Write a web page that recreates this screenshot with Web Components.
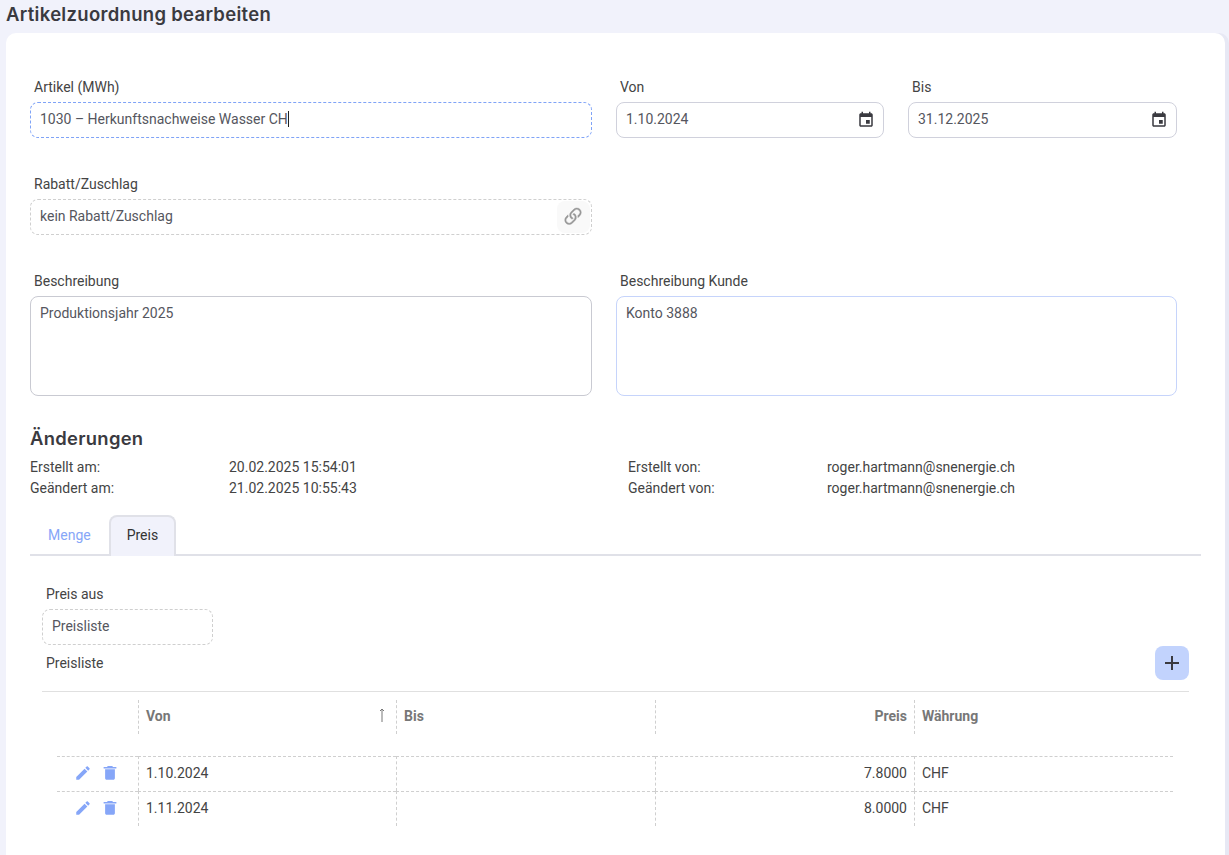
<!DOCTYPE html>
<html lang="de">
<head>
<meta charset="utf-8">
<title>Artikelzuordnung bearbeiten</title>
<style>
    html, body {
        margin: 0;
        height: 100%;
        overflow: hidden;
    }
    body {
        background: #f1f2fb;
        font-family: Roboto, "Liberation Sans", sans-serif;
        font-size: 14px;
        color: #444;
    }
</style>
</head>
<body>
<edit-page>
    <span slot="title">Artikelzuordnung bearbeiten</span>
    <form-row>
        <form-field label="Artikel (MWh)" variant="focus" style="width:562px"><span>1030 – Herkunftsnachweise Wasser CH</span><i-caret></i-caret></form-field>
        <form-field label="Von" variant="solid" style="width:268px">1.10.2024<form-icon slot="end" name="event" style="margin-right:-1px"></form-icon></form-field>
        <form-field label="Bis" variant="solid" style="width:269px">31.12.2025<form-icon slot="end" name="event" style="margin-right:-1px"></form-icon></form-field>
    </form-row>
    <form-row>
        <form-field label="Rabatt/Zuschlag" variant="dashed" style="width:562px">kein Rabatt/Zuschlag<link-button slot="end"></link-button></form-field>
    </form-row>
    <form-row>
        <form-field label="Beschreibung" variant="area" style="width:562px">Produktionsjahr 2025</form-field>
        <form-field label="Beschreibung Kunde" variant="area-blue" style="width:561px">Konto 3888</form-field>
    </form-row>
    <change-info></change-info>
    <tab-bar></tab-bar>
    <price-panel></price-panel>
</edit-page>

<script>
const ICONS = {
    event: 'M17 12h-5v5h5v-5zM16 1v2H8V1H6v2H5c-1.11 0-1.99.9-1.99 2L3 19c0 1.1.89 2 2 2h14c1.1 0 2-.9 2-2V5c0-1.1-.9-2-2-2h-1V1h-2zm3 18H5V8h14v11z',
    edit: 'M3 17.25V21h3.75L17.81 9.94l-3.75-3.75L3 17.25zM20.71 7.04c.39-.39.39-1.02 0-1.41l-2.34-2.34c-.39-.39-1.02-.39-1.41 0l-1.83 1.83 3.75 3.75 1.83-1.83z',
    trash: 'M5.5 19c0 1.1.9 2 2 2h9c1.1 0 2-.9 2-2V7h-13v12zM20.5 4H16l-1-1.5H9L8 4H3.5v2h17V4z'
}

class EditPage extends HTMLElement {
    constructor() {
        super()
        this.attachShadow({mode: 'open'}).innerHTML = `
            <style>
                :host {
                    display: block;
                    height: 855px;
                    box-sizing: border-box;
                    padding-left: 6px;
                    padding-right: 4px;
                }
                h1 {
                    margin: 0;
                    height: 33px;
                    font: 600 18.5px/28px Inter, sans-serif;
                    letter-spacing: .3px;
                    color: #3a3a40;
                }
                .card {
                    background: #fff;
                    border-radius: 10px 10px 0 0;
                    box-shadow: 4px 0 0 #e7e8f4;
                    height: 822px;
                    box-sizing: border-box;
                    padding: 45px 24px 0 24px;
                }
            </style>
            <h1><slot name="title"></slot></h1>
            <div class="card"><slot></slot></div>
        `
    }
}

class FormRow extends HTMLElement {
    constructor() {
        super()
        this.attachShadow({mode: 'open'}).innerHTML = `
            <style>
                :host {
                    display: flex;
                    gap: 24px;
                    margin-bottom: 37px;
                }
            </style>
            <slot></slot>
        `
    }
}

class FormField extends HTMLElement {
    constructor() {
        super()
        const variant = this.getAttribute('variant') || 'solid'
        const label = this.getAttribute('label') || ''
        this.attachShadow({mode: 'open'}).innerHTML = `
            <style>
                :host {
                    display: block;
                    flex: none;
                }
                label {
                    display: block;
                    height: 24px;
                    padding-left: 4px;
                    font-size: 14px;
                    line-height: 18px;
                    color: #444;
                }
                .box {
                    display: flex;
                    align-items: center;
                    justify-content: space-between;
                    box-sizing: border-box;
                    height: 36px;
                    padding: 0 9px;
                    border-radius: 8px;
                    color: #55565e;
                    font-size: 14px;
                }
                .solid { border: 1px solid #d0d1dc; }
                .focus { border: 1px dashed #7fa3f7; }
                .dashed { border: 1px dashed #cfcfcf; }
                .area, .area-blue {
                    height: 100px;
                    align-items: flex-start;
                    padding-top: 8px;
                    border: 1px solid #c9cad2;
                }
                .area-blue { border-color: #c6d4fb; }
                .text {
                    display: flex;
                    align-items: center;
                    margin-bottom: 2px;
                }
            </style>
            <label>${label}</label>
            <div class="box ${variant}">
                <span class="text"><slot></slot></span>
                <slot name="end"></slot>
            </div>
        `
    }
}

class FormIcon extends HTMLElement {
    constructor() {
        super()
        const name = this.getAttribute('name')
        this.attachShadow({mode: 'open'}).innerHTML = `
            <style>
                :host {
                    display: block;
                    width: var(--iconSize, 18px);
                    height: var(--iconSize, 18px);
                    color: var(--iconColor, #3a3a40);
                }
                svg {
                    display: block;
                    width: 100%;
                    height: 100%;
                    fill: currentColor;
                }
            </style>
            <svg viewBox="0 0 24 24"><path d="${ICONS[name]}"/></svg>
        `
    }
}

class ICaret extends HTMLElement {
    constructor() {
        super()
        this.attachShadow({mode: 'open'}).innerHTML = `
            <style>
                :host {
                    display: block;
                    width: 1px;
                    height: 16px;
                    background: #222;
                }
            </style>
        `
    }
}

class LinkButton extends HTMLElement {
    constructor() {
        super()
        this.attachShadow({mode: 'open'}).innerHTML = `
            <style>
                :host {
                    display: flex;
                    align-items: center;
                    justify-content: center;
                    width: 33px;
                    height: 32px;
                    margin-right: -8px;
                    border-radius: 8px;
                    background: #f9f9f9;
                }
                svg {
                    width: 24px;
                    height: 24px;
                    margin-right: 2px;
                    fill: #979797;
                    stroke: #979797;
                    stroke-width: .25;
                }
            </style>
            <svg viewBox="0 0 16 16">
                <path d="M4.715 6.542 3.343 7.914a3 3 0 1 0 4.243 4.243l1.828-1.829A3 3 0 0 0 8.586 5.5L8 6.086a1.002 1.002 0 0 0-.154.199 2 2 0 0 1 .861 3.337L6.88 11.45a2 2 0 1 1-2.83-2.83l.793-.792a4.018 4.018 0 0 1-.128-1.287z"/>
                <path d="M6.586 4.672A3 3 0 0 0 7.414 9.5l.775-.776a2 2 0 0 1-.896-3.346L9.12 3.55a2 2 0 1 1 2.83 2.83l-.793.792c.112.42.155.855.128 1.287l1.372-1.372a3 3 0 1 0-4.243-4.243L6.586 4.672z"/>
            </svg>
        `
    }
}

class ChangeInfo extends HTMLElement {
    constructor() {
        super()
        this.attachShadow({mode: 'open'}).innerHTML = `
            <style>
                :host {
                    display: block;
                    margin-top: -8px;
                }
                h2 {
                    margin: 0 0 5px 0;
                    height: 27px;
                    font: 600 18.4px/27px Inter, sans-serif;
                    letter-spacing: .3px;
                    color: #3a3a40;
                }
                .grid {
                    display: grid;
                    grid-template-columns: 199px 399px 199px 1fr;
                    grid-auto-rows: 21px;
                    font-size: 14px;
                    line-height: 21px;
                    color: #444;
                }
            </style>
            <h2>Änderungen</h2>
            <div class="grid">
                <span>Erstellt am:</span><span>20.02.2025 15:54:01</span>
                <span>Erstellt von:</span><span>roger.hartmann@snenergie.ch</span>
                <span>Geändert am:</span><span>21.02.2025 10:55:43</span>
                <span>Geändert von:</span><span>roger.hartmann@snenergie.ch</span>
            </div>
        `
    }
}

class TabBar extends HTMLElement {
    constructor() {
        super()
        this.attachShadow({mode: 'open'}).innerHTML = `
            <style>
                :host {
                    display: flex;
                    margin-top: 16px;
                    width: 1171px;
                    height: 41px;
                    box-sizing: border-box;
                    border-bottom: 2px solid #e0e1e8;
                    font-size: 14px;
                }
                .tab {
                    box-sizing: border-box;
                    height: 41px;
                    line-height: 37px;
                    border: 2px solid transparent;
                    border-bottom: 0;
                }
                .inactive {
                    color: #86a6f8;
                    padding: 0 16px;
                }
                .active {
                    padding: 0 16px;
                    color: #333;
                    background: #f1f2fb;
                    border-color: #e0e1e8;
                    border-radius: 8px 8px 0 0;
                }
            </style>
            <div class="tab inactive">Menge</div>
            <div class="tab active">Preis</div>
        `
    }
}

class PricePanel extends HTMLElement {
    constructor() {
        super()
        this.attachShadow({mode: 'open'}).innerHTML = `
            <style>
                :host {
                    display: block;
                    width: 1147px;
                    margin-left: 12px;
                    padding-top: 29px;
                }
                .head {
                    display: flex;
                    align-items: flex-end;
                    justify-content: space-between;
                    height: 36px;
                    margin-top: -1px;
                }
                .caption {
                    padding-left: 4px;
                    line-height: 18px;
                    color: #444;
                    margin-bottom: 8px;
                }
                .add {
                    display: flex;
                    align-items: center;
                    justify-content: center;
                    width: 34px;
                    height: 34px;
                    border-radius: 8px;
                    background: #c2d3fd;
                }
                .add svg {
                    width: 14px;
                    height: 14px;
                    stroke: #3a3a40;
                    stroke-width: 2;
                }
                hr {
                    margin: 11px 0 0 0;
                    border: 0;
                    border-top: 1px solid #e0e0e0;
                }
            </style>
            <form-field label="Preis aus" variant="dashed" style="width:171px">Preisliste</form-field>
            <div class="head">
                <span class="caption">Preisliste</span>
                <span class="add"><svg viewBox="0 0 14 14"><path d="M0 7h14M7 0v14"/></svg></span>
            </div>
            <hr>
            <price-table></price-table>
        `
    }
}

class PriceTable extends HTMLElement {
    constructor() {
        super()
        const rows = [['1.10.2024', '7.8000', 'CHF'], ['1.11.2024', '8.0000', 'CHF']]
        const icon = '--iconColor:#86a6f8;--iconSize:18px'
        this.attachShadow({mode: 'open'}).innerHTML = `
            <style>
                :host {
                    display: grid;
                    grid-template-columns: 81px 258px 259px 259px 259px;
                    width: 1116px;
                    margin: 8px 0 0 15px;
                    font-size: 14px;
                    color: #444;
                }
                .th, .td {
                    box-sizing: border-box;
                    display: flex;
                    align-items: center;
                    padding: 0 7px 2px 7px;
                }
                .th {
                    height: 34px;
                    font-weight: 700;
                    color: #777;
                    margin-bottom: 22px;
                    justify-content: space-between;
                }
                .td {
                    height: 35px;
                    border-top: 1px dashed #cfcfcf;
                }
                .line { border-left: 1px dashed #cfcfcf; }
                .num { justify-content: flex-end; }
                .actions {
                    justify-content: flex-start;
                    gap: 9px;
                    padding: 0 0 2px 17px;
                }
                .sort {
                    width: 8px;
                    height: 14px;
                    margin: -2px 3px 0 0;
                    fill: none;
                    stroke: #777;
                    stroke-width: 1;
                }
            </style>
            <div class="th"></div>
            <div class="th line">Von<svg class="sort" viewBox="0 0 8 14"><path d="M4 14V1M2 3 4 1l2 2"/></svg></div>
            <div class="th line">Bis</div>
            <div class="th line num">Preis</div>
            <div class="th line">Währung</div>
            ${rows.map(r => `
                <div class="td actions">
                    <form-icon name="edit" style="${icon}"></form-icon>
                    <form-icon name="trash" style="${icon}"></form-icon>
                </div>
                <div class="td line">${r[0]}</div>
                <div class="td line"></div>
                <div class="td line num">${r[1]}</div>
                <div class="td line">${r[2]}</div>
            `).join('')}
        `
    }
}

customElements.define('form-icon', FormIcon)
customElements.define('i-caret', ICaret)
customElements.define('link-button', LinkButton)
customElements.define('form-field', FormField)
customElements.define('form-row', FormRow)
customElements.define('change-info', ChangeInfo)
customElements.define('tab-bar', TabBar)
customElements.define('price-table', PriceTable)
customElements.define('price-panel', PricePanel)
customElements.define('edit-page', EditPage)
</script>
</body>
</html>
